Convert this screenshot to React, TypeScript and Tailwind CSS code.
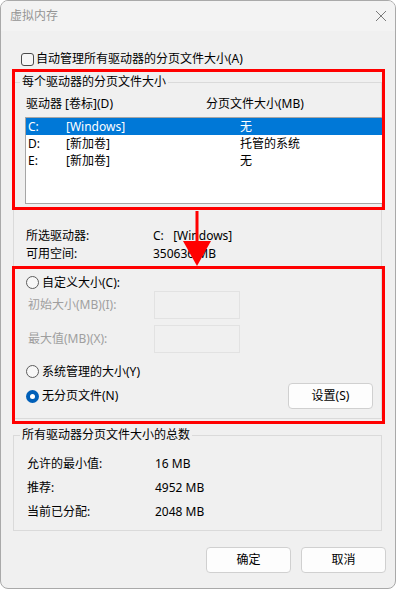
import React from "react";

function Radio({ checked }: { checked?: boolean }) {
  return checked ? (
    <span className="w-[13px] h-[13px] rounded-full bg-[#005fb8] flex items-center justify-center shrink-0">
      <span className="w-[5px] h-[5px] rounded-full bg-white" />
    </span>
  ) : (
    <span className="w-[13px] h-[13px] rounded-full border border-[#5c5c5c] bg-[#f7f7f7] shrink-0" />
  );
}

export default function App() {
  return (
    <div className="w-[396px] h-[589px] bg-white">
      <div className="relative w-[396px] h-[589px] rounded-[8px] border border-[#a9a9a9] bg-[#f0f0f0] overflow-hidden font-['Noto_Sans','Noto_Sans_CJK_SC',sans-serif] text-[12px] text-black">
        {/* title bar */}
        <div className="h-[30px] bg-[#f3f3f3] flex items-center justify-between pl-[9px] pr-[8px] pb-[1px]">
          <span className="text-[#959595] leading-[16px]">虚拟内存</span>
          <svg width="12" height="12" viewBox="0 0 12 12" className="block">
            <path d="M1 1 L11 11 M11 1 L1 11" stroke="#7a7a7a" strokeWidth="1" fill="none" />
          </svg>
        </div>

        <div className="pl-[12px]">
          {/* auto manage checkbox */}
          <div className="mt-[20px] ml-[8px] h-[16px] flex items-center gap-[2px] leading-[16px]">
            <span className="w-[13px] h-[13px] rounded-[3px] border border-[#4a4a4a] bg-[#f6f6f6] shrink-0" />
            <span>自动管理所有驱动器的分页文件大小(A)</span>
          </div>

          {/* group 1 */}
          <fieldset className="mt-[7px] w-[369px] min-w-0 border border-[#dadada] p-0 m-0">
            <legend className="ml-[6px] px-[2px] leading-[16px]">每个驱动器的分页文件大小</legend>
            <div className="pl-[11px] pr-[8px] pt-[6px] pb-[9px]">
              <div className="flex h-[16px] leading-[16px]">
                <span className="w-[181px] pl-[1px]">驱动器 [卷标](D)</span>
                <span>分页文件大小(MB)</span>
              </div>
              <div className="mt-[5px] w-[358px] h-[87px] border border-[#a6a6a6] bg-white">
                <div className="flex items-center h-[17px] pl-[2px] bg-[#0078d7] text-white">
                  <span className="w-[38px]">C:</span>
                  <span className="w-[174px]">[Windows]</span>
                  <span>无</span>
                </div>
                <div className="flex items-center h-[17px] pl-[2px]">
                  <span className="w-[38px]">D:</span>
                  <span className="w-[174px]">[新加卷]</span>
                  <span>托管的系统</span>
                </div>
                <div className="flex items-center h-[17px] pl-[2px]">
                  <span className="w-[38px]">E:</span>
                  <span className="w-[174px]">[新加卷]</span>
                  <span>无</span>
                </div>
              </div>

              <div className="mt-[23px] flex h-[18px] leading-[18px]">
                <span className="w-[128px] pl-[1px]">所选驱动器:</span>
                <span>C:&nbsp;&nbsp;&nbsp;[Windows]</span>
              </div>
              <div className="flex h-[18px] leading-[18px]">
                <span className="w-[128px] pl-[1px]">可用空间:</span>
                <span>350636 MB</span>
              </div>

              <div className="mt-[11px] flex items-center h-[17px] pl-[1px] gap-[3px]">
                <Radio />
                <span>自定义大小(C):</span>
              </div>
              <div className="flex items-center">
                <span className="w-[129px] pl-[3px] text-[#9f9f9f]">初始大小(MB)(I):</span>
                <span className="w-[86px] h-[28px] border border-[#e2e2e2]" />
              </div>
              <div className="mt-[6px] flex items-center">
                <span className="w-[129px] pl-[3px] text-[#9f9f9f]">最大值(MB)(X):</span>
                <span className="w-[86px] h-[28px] border border-[#e2e2e2]" />
              </div>
              <div className="mt-[10px] flex items-center h-[17px] pl-[1px] gap-[3px]">
                <Radio />
                <span>系统管理的大小(Y)</span>
              </div>
              <div className="mt-[3px] flex items-center justify-between h-[26px]">
                <div className="flex items-center pl-[1px] gap-[3px]">
                  <Radio checked />
                  <span>无分页文件(N)</span>
                </div>
                <button className="w-[85px] h-[26px] bg-[#fdfdfd] border border-[#d0d0d0] rounded-[4px] text-[12px] text-black">
                  设置(S)
                </button>
              </div>
            </div>
          </fieldset>

          {/* group 2 */}
          <fieldset className="mt-[8px] w-[369px] min-w-0 border border-[#dadada] p-0 m-0">
            <legend className="ml-[6px] px-[2px] leading-[16px]">所有驱动器分页文件大小的总数</legend>
            <div className="pl-[13px] pt-[9px] pb-[6px]">
              <div className="flex h-[24px] items-center">
                <span className="w-[128px]">允许的最小值:</span>
                <span>16 MB</span>
              </div>
              <div className="flex h-[24px] items-center">
                <span className="w-[128px]">推荐:</span>
                <span>4952 MB</span>
              </div>
              <div className="flex h-[24px] items-center">
                <span className="w-[128px]">当前已分配:</span>
                <span>2048 MB</span>
              </div>
            </div>
          </fieldset>
        </div>

        {/* bottom buttons */}
        <div className="mt-[16px] flex justify-end gap-[10px] pr-[9px]">
          <button className="w-[85px] h-[26px] bg-[#fdfdfd] border border-[#d0d0d0] rounded-[4px] text-[12px] text-black">
            确定
          </button>
          <button className="w-[85px] h-[26px] bg-[#fdfdfd] border border-[#d0d0d0] rounded-[4px] text-[12px] text-black">
            取消
          </button>
        </div>

        {/* annotation overlays */}
        <div className="absolute left-[11px] top-[68px] w-[373px] h-[141px] border-[3px] border-[#ff0000] pointer-events-none" />
        <div className="absolute left-[11px] top-[265px] w-[373px] h-[158px] border-[3px] border-[#ff0000] pointer-events-none" />
        <svg className="absolute left-[181px] top-[208px] pointer-events-none" width="30" height="60" viewBox="0 0 30 60">
          <rect x="13.5" y="2" width="3" height="32" fill="#ff0000" />
          <polygon points="1,32 29,32 15,57" fill="#ff0000" />
        </svg>
      </div>
    </div>
  );
}
